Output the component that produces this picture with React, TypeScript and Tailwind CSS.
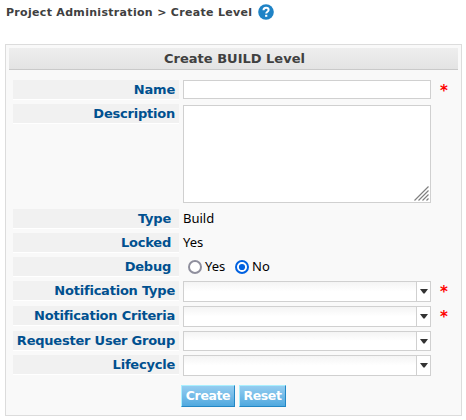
import React from "react";

const bold = "font-['DejaVu_Sans',sans-serif] font-bold";

function Label({ text, pad = "pr-1" }: { text: string; pad?: string }) {
  return (
    <div
      className={`h-5 w-[166px] shrink-0 whitespace-nowrap border-b border-white bg-[#f1f1f1] text-right text-[13px] leading-[19px] tracking-[-0.22px] text-[#00508f] ${bold} ${pad}`}
    >
      {text}
    </div>
  );
}

function Required() {
  return <span className={`ml-[9px] mt-[2px] text-[15px] leading-[18px] text-[#ff0000] ${bold}`}>*</span>;
}

function Select({ height = "h-[21px]" }: { height?: string }) {
  return (
    <div className={`flex w-[248px] border border-[#d0d0d0] bg-linear-to-b from-[#f4f4f4] to-white to-50% ${height}`}>
      <div className="flex-1" />
      <div className="flex w-[14px] justify-center border-l border-[#d0d0d0] bg-white pt-[7px]">
        <svg width="8" height="5" viewBox="0 0 8 5">
          <path d="M0 0H8L4.6 4.6H3.4Z" fill="#333" />
        </svg>
      </div>
    </div>
  );
}

function Row({ height, label, pad, children }: { height: string; label: string; pad?: string; children: React.ReactNode }) {
  return (
    <div className={`flex items-start ${height}`}>
      <Label text={label} pad={pad} />
      <div className="ml-1 flex items-start">{children}</div>
    </div>
  );
}

const value = "font-['Noto_Sans',sans-serif] text-[13px] leading-[19px] text-black";

function Radio({ checked = false }: { checked?: boolean }) {
  return (
    <svg width="14" height="14" viewBox="0 0 14 14" className="mt-[3px] shrink-0">
      <circle cx="7" cy="7" r="6" fill="#fff" stroke={checked ? "#0061e0" : "#8f8f9d"} strokeWidth="2" />
      {checked && <circle cx="7" cy="7" r="3.1" fill="#0061e0" />}
    </svg>
  );
}

function Button({ text, width }: { text: string; width: string }) {
  return (
    <button
      className={`h-[22px] whitespace-nowrap border border-b-[#2387c5] border-l-[#aaf0ff] border-r-[#2387c5] border-t-[#aaf0ff] bg-linear-to-b from-[#94cdf0] to-[#50a9df] text-center text-[12.5px] leading-[20px] tracking-[-0.4px] text-white ${bold} ${width}`}
    >
      {text}
    </button>
  );
}

export default function App() {
  return (
    <div className="h-[420px] w-[466px] overflow-hidden bg-white">
      <div className="flex h-11 items-start pl-[6px] pt-1">
        <span className={`mt-px w-[246px] whitespace-nowrap text-[11px] leading-[15px] tracking-[0.31px] text-[#404040] ${bold}`}>
          Project Administration &gt; Create Level
        </span>
        <svg width="16" height="16" viewBox="0 0 16 16" className="ml-[6px]">
          <circle cx="8" cy="8" r="7.8" fill="#1f83c6" />
          <path d="M5.5 6.2C5.5 4.5 6.5 3.7 8.1 3.7C9.6 3.7 10.6 4.6 10.6 5.9C10.6 7.7 8.2 7.7 8.2 9.6" fill="none" stroke="#fff" strokeWidth="2" />
          <rect x="7.1" y="10.8" width="2.2" height="2" fill="#fff" />
        </svg>
      </div>
      <div className="ml-[5px] h-[372px] w-[457px] border border-[#dcdcdc] bg-[#f9f9f9] px-[3px] pt-[3px]">
        <div
          className={`h-[22px] border-b border-[#c9c9c9] bg-linear-to-b from-[#eeeeee] to-[#e3e3e3] pl-[2px] text-center text-[13px] leading-[21px] text-[#404040] ${bold}`}
        >
          Create BUILD Level
        </div>
        <div className="pl-1 pt-[10px]">
          <Row height="h-6" label="Name">
            <div className="h-[19px] w-[248px] border border-[#d0d0d0] bg-white" />
            <Required />
          </Row>
          <Row height="h-[105px]" label="Description">
            <div className="mt-px flex h-[98px] w-[248px] items-end justify-end border border-[#d0d0d0] bg-white p-px">
              <svg width="15" height="15" viewBox="0 0 15 15">
                <path d="M.5 14.5L14.5.5M4.5 14.5L14.5 4.5M8.5 14.5L14.5 8.5M12.5 14.5L14.5 12.5" stroke="#808080" strokeWidth="1.2" fill="none" />
              </svg>
            </div>
          </Row>
          <Row height="h-6" label="Type" pad="pr-2">
            <span className={value}>Build</span>
          </Row>
          <Row height="h-6" label="Locked" pad="pr-2">
            <span className={value}>Yes</span>
          </Row>
          <Row height="h-6" label="Debug" pad="pr-2">
            <div className="ml-[5px] flex">
              <Radio />
              <span className={`ml-[3px] w-[30px] ${value}`}>Yes</span>
              <Radio checked />
              <span className={`ml-[3px] ${value}`}>No</span>
            </div>
          </Row>
          <Row height="h-[25px]" label="Notification Type">
            <Select />
            <Required />
          </Row>
          <Row height="h-[25px]" label="Notification Criteria">
            <Select />
            <Required />
          </Row>
          <Row height="h-6" label="Requester User Group">
            <Select height="h-5" />
          </Row>
          <Row height="h-[30px]" label="Lifecycle">
            <Select />
          </Row>
          <div className="ml-[168px] flex gap-1">
            <Button text="Create" width="w-[54px]" />
            <Button text="Reset" width="w-[47px]" />
          </div>
        </div>
      </div>
    </div>
  );
}
